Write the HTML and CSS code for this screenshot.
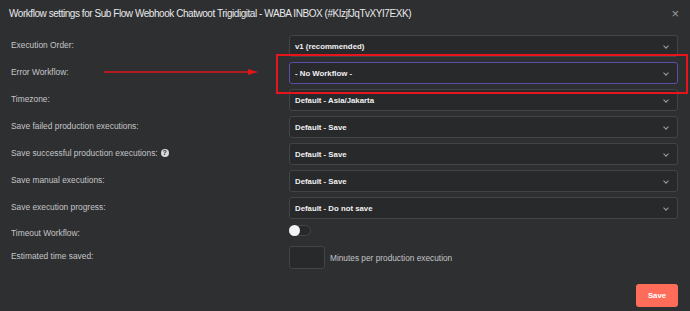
FILE: index.html
```html
<!DOCTYPE html>
<html lang="en">
<head>
  <meta charset="UTF-8">
  <title>Workflow settings</title>
  <link rel="stylesheet" href="styles.css">
</head>
<body>

  <!-- Modal -->
  <div class="modal">
    <div class="modal-header">
      <h1>Workflow settings for Sub Flow Webhook Chatwoot Trigidigital - WABA INBOX (#KIzjfJqTvXYI7EXK)</h1>
      <button class="close" aria-label="Close">&times;</button>
    </div>

    <div class="settings">
      <label>Execution Order:</label>
      <div class="select">v1 (recommended)</div>

      <label>Error Workflow:</label>
      <div class="select focused">- No Workflow -</div>

      <label>Timezone:</label>
      <div class="select">Default - Asia/Jakarta</div>

      <label>Save failed production executions:</label>
      <div class="select">Default - Save</div>

      <label>Save successful production executions: <span class="help">?</span></label>
      <div class="select">Default - Save</div>

      <label>Save manual executions:</label>
      <div class="select">Default - Save</div>

      <label>Save execution progress:</label>
      <div class="select">Default - Do not save</div>

      <label class="toggle-label">Timeout Workflow:</label>
      <div class="toggle-row"><span class="toggle"></span></div>

      <label>Estimated time saved:</label>
      <div class="time-row">
        <span class="number-input"></span>
        <span class="hint">Minutes per production execution</span>
      </div>
    </div>

    <div class="modal-footer">
      <button class="save">Save</button>
    </div>
  </div>

  <!-- Annotation -->
  <div class="highlight"></div>
  <svg class="arrow" width="160" height="10" viewBox="0 0 160 10">
    <line x1="0" y1="5" x2="146" y2="5" stroke="#e0161a" stroke-width="1.3"/>
    <polygon points="144,2 154,5 144,8" fill="#e0161a"/>
  </svg>

</body>
</html>
```

FILE: styles.css
```css
* {
  box-sizing: border-box;
}

body {
  margin: 0;
  width: 690px;
  height: 311px;
  background: #2e2f31;
  font-family: 'Liberation Sans', Arial, sans-serif;
  color: #c9cacc;
  overflow: hidden;
  position: relative;
}

.modal-header {
  display: flex;
  align-items: center;
  justify-content: space-between;
  padding: 1px 8px 0 9px;
  height: 26px;
}

.modal-header h1 {
  margin: 0;
  font-size: 10px;
  font-weight: 400;
  letter-spacing: -0.45px;
  color: #e8e9ea;
  white-space: nowrap;
}

.close {
  background: none;
  border: none;
  color: #9a9b9d;
  font-size: 13px;
  padding: 0 3px;
  cursor: pointer;
}

.settings {
  display: grid;
  grid-template-columns: 278px 389px;
  grid-template-rows: repeat(7, 22px) 17px 23px;
  row-gap: 5px;
  align-items: center;
  padding: 9px 0 0 11px;
}

.settings label {
  font-size: 8.4px;
  color: #c4c5c7;
  display: flex;
  align-items: center;
  gap: 3px;
  margin-top: -3px;
}

.help {
  display: inline-flex;
  align-items: center;
  justify-content: center;
  width: 8px;
  height: 8px;
  border-radius: 50%;
  background: #d8d9db;
  color: #2e2f31;
  font-size: 7px;
  font-weight: 700;
}

.select {
  height: 22px;
  border: 1px solid #434446;
  border-radius: 3px;
  background: #28292b;
  color: #f1f1f2;
  font-size: 7.8px;
  font-weight: 700;
  display: flex;
  align-items: center;
  padding: 0 5px;
  position: relative;
}

.select::after {
  content: '';
  position: absolute;
  right: 9px;
  top: 8px;
  width: 3px;
  height: 3px;
  border-right: 1px solid #9fa0a2;
  border-bottom: 1px solid #9fa0a2;
  transform: rotate(45deg);
}

.select.focused {
  border-color: #5a4fa8;
}

.settings .toggle-label {
  margin-top: 0;
}

.toggle-row {
  display: flex;
  align-items: flex-start;
  height: 17px;
  padding-top: 1px;
}

.toggle {
  width: 22px;
  height: 11px;
  border: 1px solid #434446;
  border-radius: 6px;
  background: #28292b;
  position: relative;
}

.toggle::before {
  content: '';
  position: absolute;
  left: -1px;
  top: -1px;
  width: 11px;
  height: 11px;
  border-radius: 50%;
  background: #f4f4f5;
}

.time-row {
  display: flex;
  align-items: center;
  gap: 5px;
}

.number-input {
  width: 36px;
  height: 23px;
  border: 1px solid #434446;
  border-radius: 3px;
  background: #28292b;
}

.hint {
  font-size: 8.3px;
  color: #c4c5c7;
}

.modal-footer {
  display: flex;
  justify-content: flex-end;
  padding: 15px 12px 0 0;
}

.save {
  width: 42px;
  height: 23px;
  border: none;
  border-radius: 3px;
  background: #ff6d5a;
  color: #fff;
  font-family: inherit;
  font-size: 7.8px;
  font-weight: 700;
  cursor: pointer;
}

.highlight {
  position: absolute;
  left: 276px;
  top: 54px;
  width: 412px;
  height: 40px;
  border: 2px solid #e8141b;
  pointer-events: none;
}

.arrow {
  position: absolute;
  left: 104px;
  top: 67px;
}
```
